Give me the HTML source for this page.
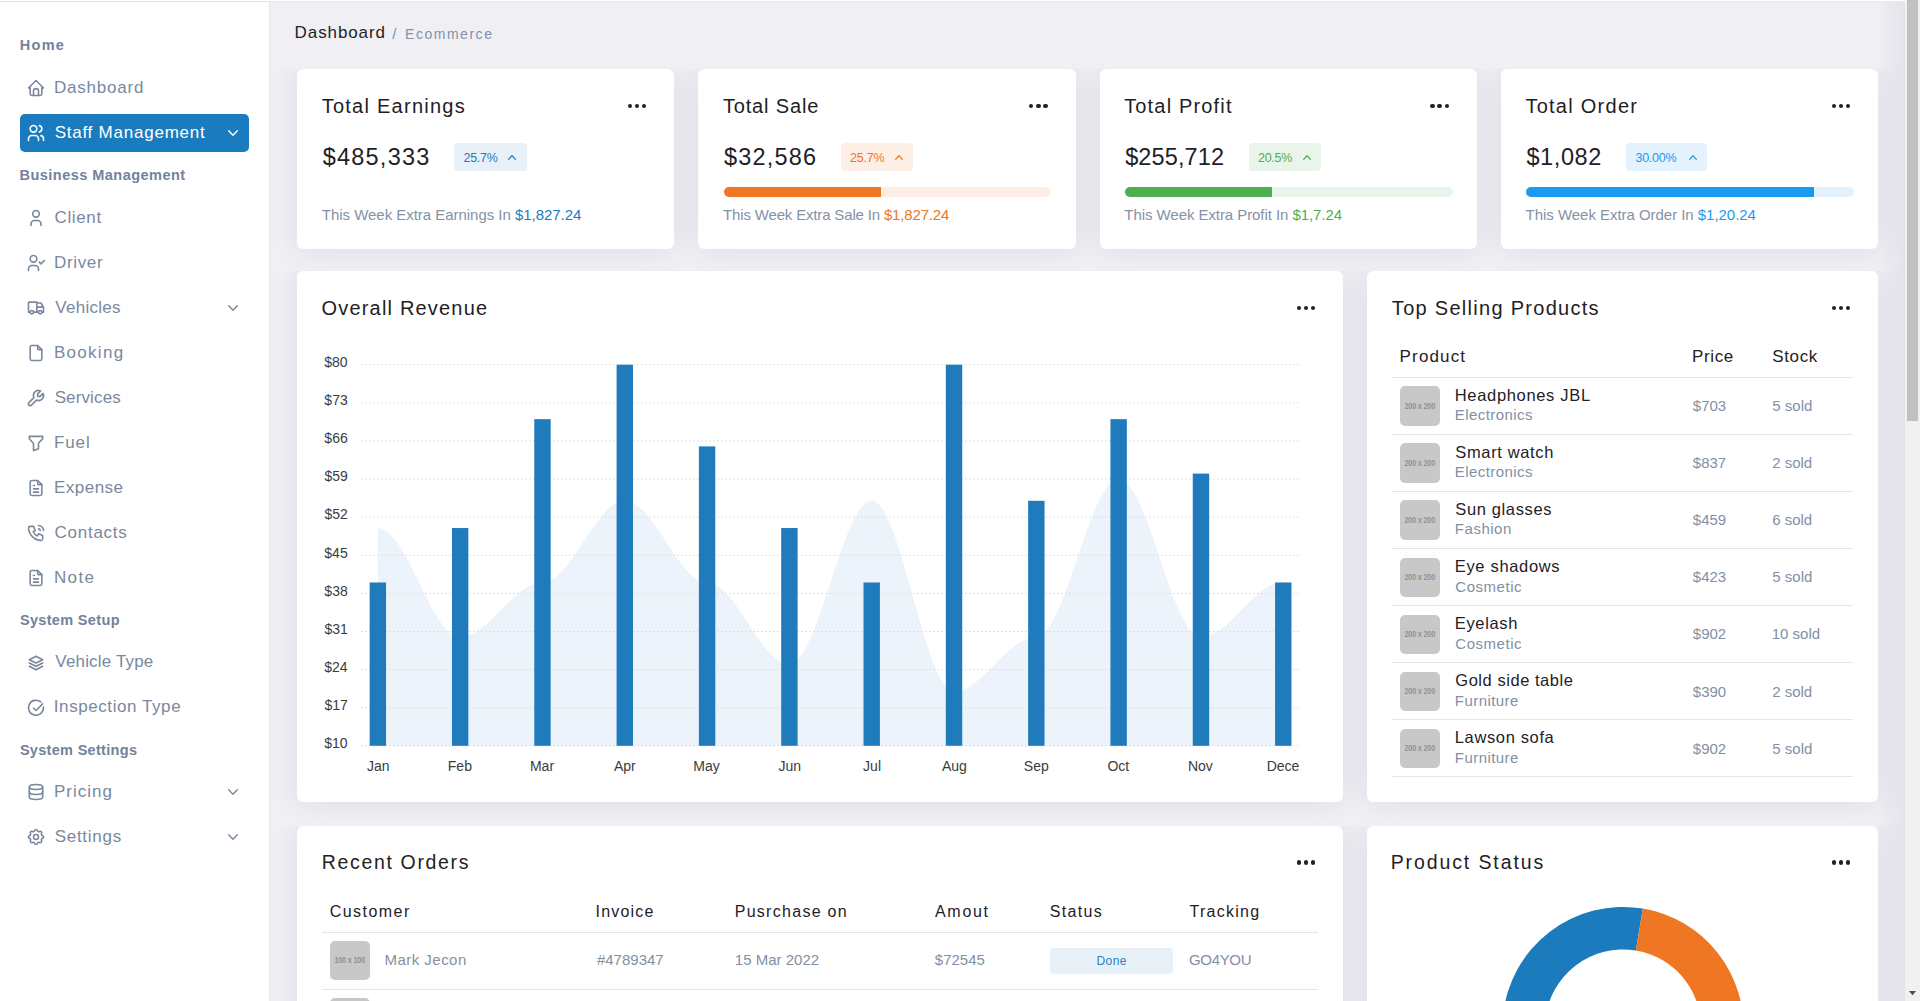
<!DOCTYPE html><html><head><meta charset="utf-8"><style>
*{margin:0;padding:0;box-sizing:border-box}
html,body{width:1920px;height:1001px;overflow:hidden}
body{position:relative;background:#efeff4;font-family:"Liberation Sans",sans-serif}
.t{position:absolute;white-space:nowrap}
.r{position:absolute}
svg{position:absolute;overflow:visible}
.card{position:absolute;background:#fff;border-radius:6px;box-shadow:0 0 30px rgba(30,30,70,0.09);clip-path:inset(0 -80px -80px -80px)}
</style></head><body>

<div class="r" style="left:0.00px;top:0.00px;width:269.00px;height:1001.00px;background:#fff;"></div>
<div class="r" style="left:269.00px;top:0.00px;width:1.00px;height:1001.00px;background:#e6e6e6;"></div>
<div class="r" style="left:0.00px;top:0.00px;width:1920.00px;height:1.00px;background:#fff;"></div>
<div class="r" style="left:0.00px;top:1.00px;width:269.00px;height:1.00px;background:#e3e3e3;"></div>
<div class="r" style="left:270.00px;top:1.00px;width:1635.00px;height:1.00px;background:#e6e9f0;"></div>
<div class="t " style="left:19.83px;top:37.82px;font-size:14.50px;line-height:14.50px;color:#72829a;font-weight:700;letter-spacing:1.260px;">Home</div>
<div class="t " style="left:19.53px;top:167.72px;font-size:14.50px;line-height:14.50px;color:#72829a;font-weight:700;letter-spacing:0.473px;">Business Management</div>
<div class="t " style="left:19.88px;top:613.42px;font-size:14.50px;line-height:14.50px;color:#72829a;font-weight:700;letter-spacing:0.338px;">System Setup</div>
<div class="t " style="left:19.88px;top:742.62px;font-size:14.50px;line-height:14.50px;color:#72829a;font-weight:700;letter-spacing:0.307px;">System Settings</div>
<div class="r" style="left:20.00px;top:114.00px;width:229.00px;height:38.00px;background:#1b7bbf;border-radius:5px;"></div>
<svg style="left:26.00px;top:78.00px" width="20" height="20" viewBox="0 0 24 24" fill="none" stroke="#7a889e" stroke-width="1.92" stroke-linecap="round" stroke-linejoin="round"><path d="M5 12l-2 0l9 -9l9 9l-2 0"/><path d="M5 12v7a2 2 0 0 0 2 2h10a2 2 0 0 0 2 -2v-7"/><path d="M9 21v-6a2 2 0 0 1 2 -2h2a2 2 0 0 1 2 2v6"/></svg>
<div class="t " style="left:54.01px;top:78.61px;font-size:17.00px;line-height:17.00px;color:#7a889e;letter-spacing:0.791px;">Dashboard</div>
<svg style="left:26.00px;top:123.00px" width="20" height="20" viewBox="0 0 24 24" fill="none" stroke="#fff" stroke-width="1.92" stroke-linecap="round" stroke-linejoin="round"><path d="M9 7m-4 0a4 4 0 1 0 8 0a4 4 0 1 0 -8 0"/><path d="M3 21v-2a4 4 0 0 1 4 -4h4a4 4 0 0 1 4 4v2"/><path d="M16 3.13a4 4 0 0 1 0 7.75"/><path d="M21 21v-2a4 4 0 0 0 -3 -3.85"/></svg>
<div class="t " style="left:54.63px;top:123.61px;font-size:17.00px;line-height:17.00px;color:#fff;letter-spacing:0.766px;">Staff Management</div>
<svg style="left:228.30px;top:129.80px" width="10" height="6" viewBox="0 0 10 6"><path d="M0.70 0.70 L5.00 5.30 L9.30 0.70" fill="none" stroke="#fff" stroke-width="1.40" stroke-linecap="round" stroke-linejoin="round"/></svg>
<svg style="left:26.00px;top:208.00px" width="20" height="20" viewBox="0 0 24 24" fill="none" stroke="#7a889e" stroke-width="1.92" stroke-linecap="round" stroke-linejoin="round"><path d="M8 7a4 4 0 1 0 8 0a4 4 0 0 0 -8 0"/><path d="M6 21v-2a4 4 0 0 1 4 -4h4a4 4 0 0 1 4 4v2"/></svg>
<div class="t " style="left:54.54px;top:208.61px;font-size:17.00px;line-height:17.00px;color:#7a889e;letter-spacing:0.625px;">Client</div>
<svg style="left:26.00px;top:253.00px" width="20" height="20" viewBox="0 0 24 24" fill="none" stroke="#7a889e" stroke-width="1.92" stroke-linecap="round" stroke-linejoin="round"><circle cx="9" cy="7" r="4"/><path d="M3 21v-2a4 4 0 0 1 4 -4h4a4 4 0 0 1 4 4v2"/><path d="M16 11l2 2l4 -4"/></svg>
<div class="t " style="left:54.01px;top:253.61px;font-size:17.00px;line-height:17.00px;color:#7a889e;letter-spacing:0.649px;">Driver</div>
<svg style="left:26.00px;top:298.00px" width="20" height="20" viewBox="0 0 24 24" fill="none" stroke="#7a889e" stroke-width="1.92" stroke-linecap="round" stroke-linejoin="round"><path d="M7 17m-2 0a2 2 0 1 0 4 0a2 2 0 1 0 -4 0"/><path d="M17 17m-2 0a2 2 0 1 0 4 0a2 2 0 1 0 -4 0"/><path d="M5 17h-2v-11a1 1 0 0 1 1 -1h9v12m-4 0h6m4 0h2v-6h-8m0 -5h5l3 5"/></svg>
<div class="t " style="left:55.33px;top:298.61px;font-size:17.00px;line-height:17.00px;color:#7a889e;letter-spacing:0.248px;">Vehicles</div>
<svg style="left:228.30px;top:304.80px" width="10" height="6" viewBox="0 0 10 6"><path d="M0.70 0.70 L5.00 5.30 L9.30 0.70" fill="none" stroke="#7a889e" stroke-width="1.40" stroke-linecap="round" stroke-linejoin="round"/></svg>
<svg style="left:26.00px;top:343.00px" width="20" height="20" viewBox="0 0 24 24" fill="none" stroke="#7a889e" stroke-width="1.92" stroke-linecap="round" stroke-linejoin="round"><path d="M14 3v4a1 1 0 0 0 1 1h4"/><path d="M17 21h-10a2 2 0 0 1 -2 -2v-14a2 2 0 0 1 2 -2h7l5 5v11a2 2 0 0 1 -2 2z"/></svg>
<div class="t " style="left:54.01px;top:343.61px;font-size:17.00px;line-height:17.00px;color:#7a889e;letter-spacing:1.276px;">Booking</div>
<svg style="left:26.00px;top:388.00px" width="20" height="20" viewBox="0 0 24 24" fill="none" stroke="#7a889e" stroke-width="1.92" stroke-linecap="round" stroke-linejoin="round"><g transform="translate(24 0) scale(-1 1)"><path d="M7 10h3v-3l-3.5 -3.5a6 6 0 0 1 8 8l6 6a2 2 0 0 1 -3 3l-6 -6a6 6 0 0 1 -8 -8l3.5 3.5"/></g></svg>
<div class="t " style="left:54.63px;top:388.61px;font-size:17.00px;line-height:17.00px;color:#7a889e;letter-spacing:0.129px;">Services</div>
<svg style="left:26.00px;top:433.00px" width="20" height="20" viewBox="0 0 24 24" fill="none" stroke="#7a889e" stroke-width="1.92" stroke-linecap="round" stroke-linejoin="round"><path d="M4 4h16v2.172a2 2 0 0 1 -.586 1.414l-4.414 4.414v7l-6 2v-8.5l-4.48 -4.928a2 2 0 0 1 -.52 -1.345v-2.227z"/></svg>
<div class="t " style="left:54.01px;top:433.61px;font-size:17.00px;line-height:17.00px;color:#7a889e;letter-spacing:0.887px;">Fuel</div>
<svg style="left:26.00px;top:478.00px" width="20" height="20" viewBox="0 0 24 24" fill="none" stroke="#7a889e" stroke-width="1.92" stroke-linecap="round" stroke-linejoin="round"><path d="M14 3v4a1 1 0 0 0 1 1h4"/><path d="M17 21h-10a2 2 0 0 1 -2 -2v-14a2 2 0 0 1 2 -2h7l5 5v11a2 2 0 0 1 -2 2z"/><path d="M9 9l1 0"/><path d="M9 13l6 0"/><path d="M9 17l6 0"/></svg>
<div class="t " style="left:54.01px;top:478.61px;font-size:17.00px;line-height:17.00px;color:#7a889e;letter-spacing:0.482px;">Expense</div>
<svg style="left:26.00px;top:523.00px" width="20" height="20" viewBox="0 0 24 24" fill="none" stroke="#7a889e" stroke-width="1.92" stroke-linecap="round" stroke-linejoin="round"><path d="M5 4h4l2 5l-2.5 1.5a11 11 0 0 0 5 5l1.5 -2.5l5 2v4a2 2 0 0 1 -2 2a16 16 0 0 1 -15 -15a2 2 0 0 1 2 -2"/><path d="M15 7a2 2 0 0 1 2 2"/><path d="M15 3a6 6 0 0 1 6 6"/></svg>
<div class="t " style="left:54.54px;top:523.61px;font-size:17.00px;line-height:17.00px;color:#7a889e;letter-spacing:0.742px;">Contacts</div>
<svg style="left:26.00px;top:568.00px" width="20" height="20" viewBox="0 0 24 24" fill="none" stroke="#7a889e" stroke-width="1.92" stroke-linecap="round" stroke-linejoin="round"><path d="M14 3v4a1 1 0 0 0 1 1h4"/><path d="M17 21h-10a2 2 0 0 1 -2 -2v-14a2 2 0 0 1 2 -2h7l5 5v11a2 2 0 0 1 -2 2z"/><path d="M9 9l1 0"/><path d="M9 13l6 0"/><path d="M9 17l6 0"/></svg>
<div class="t " style="left:54.01px;top:568.61px;font-size:17.00px;line-height:17.00px;color:#7a889e;letter-spacing:1.347px;">Note</div>
<svg style="left:26.00px;top:652.60px" width="20" height="20" viewBox="0 0 24 24" fill="none" stroke="#7a889e" stroke-width="1.92" stroke-linecap="round" stroke-linejoin="round"><path d="M12 4l-8 4l8 4l8 -4l-8 -4"/><path d="M4 12l8 4l8 -4"/><path d="M4 16l8 4l8 -4"/></svg>
<div class="t " style="left:55.33px;top:653.21px;font-size:17.00px;line-height:17.00px;color:#7a889e;letter-spacing:0.169px;">Vehicle Type</div>
<svg style="left:26.00px;top:697.60px" width="20" height="20" viewBox="0 0 24 24" fill="none" stroke="#7a889e" stroke-width="1.92" stroke-linecap="round" stroke-linejoin="round"><path d="M20.94 11a9 9 0 1 1 -3.24 -6.28"/><path d="M9 12l3 3l8 -8"/></svg>
<div class="t " style="left:53.83px;top:698.21px;font-size:17.00px;line-height:17.00px;color:#7a889e;letter-spacing:0.572px;">Inspection Type</div>
<svg style="left:26.00px;top:782.00px" width="20" height="20" viewBox="0 0 24 24" fill="none" stroke="#7a889e" stroke-width="1.92" stroke-linecap="round" stroke-linejoin="round"><path d="M12 6m-8 0a8 3 0 1 0 16 0a8 3 0 1 0 -16 0"/><path d="M4 6v6a8 3 0 0 0 16 0v-6"/><path d="M4 12v6a8 3 0 0 0 16 0v-6"/></svg>
<div class="t " style="left:54.01px;top:782.61px;font-size:17.00px;line-height:17.00px;color:#7a889e;letter-spacing:0.988px;">Pricing</div>
<svg style="left:228.30px;top:788.80px" width="10" height="6" viewBox="0 0 10 6"><path d="M0.70 0.70 L5.00 5.30 L9.30 0.70" fill="none" stroke="#7a889e" stroke-width="1.40" stroke-linecap="round" stroke-linejoin="round"/></svg>
<svg style="left:26.00px;top:827.00px" width="20" height="20" viewBox="0 0 24 24" fill="none" stroke="#7a889e" stroke-width="1.92" stroke-linecap="round" stroke-linejoin="round"><path d="M10.325 4.317c.426 -1.756 2.924 -1.756 3.35 0a1.724 1.724 0 0 0 2.573 1.066c1.543 -.94 3.31 .826 2.37 2.37a1.724 1.724 0 0 0 1.065 2.572c1.756 .426 1.756 2.924 0 3.35a1.724 1.724 0 0 0 -1.066 2.573c.94 1.543 -.826 3.31 -2.37 2.37a1.724 1.724 0 0 0 -2.572 1.065c-.426 1.756 -2.924 1.756 -3.35 0a1.724 1.724 0 0 0 -2.573 -1.066c-1.543 .94 -3.31 -.826 -2.37 -2.37a1.724 1.724 0 0 0 -1.065 -2.572c-1.756 -.426 -1.756 -2.924 0 -3.35a1.724 1.724 0 0 0 1.066 -2.573c-.94 -1.543 .826 -3.31 2.37 -2.37c1 .608 2.296 .07 2.572 -1.065z"/><path d="M9 12a3 3 0 1 0 6 0a3 3 0 0 0 -6 0"/></svg>
<div class="t " style="left:54.63px;top:827.61px;font-size:17.00px;line-height:17.00px;color:#7a889e;letter-spacing:0.737px;">Settings</div>
<svg style="left:228.30px;top:833.80px" width="10" height="6" viewBox="0 0 10 6"><path d="M0.70 0.70 L5.00 5.30 L9.30 0.70" fill="none" stroke="#7a889e" stroke-width="1.40" stroke-linecap="round" stroke-linejoin="round"/></svg>
<div class="t " style="left:294.61px;top:24.46px;font-size:17.00px;line-height:17.00px;color:#1f2125;letter-spacing:0.903px;">Dashboard</div>
<div class="t " style="left:392.30px;top:26.15px;font-size:15.00px;line-height:15.00px;color:#8193aa;">/</div>
<div class="t " style="left:405.05px;top:27.00px;font-size:14.00px;line-height:14.00px;color:#8193aa;letter-spacing:1.523px;">Ecommerce</div>
<div class="card" style="left:297.00px;top:69px;width:377.25px;height:180px"></div>
<div class="t " style="left:321.65px;top:95.77px;font-size:20.00px;line-height:20.00px;color:#1f2125;letter-spacing:1.259px;">Total Earnings</div>
<div class="r" style="left:627.80px;top:103.50px;width:4.4px;height:4.4px;border-radius:50%;background:#222"></div>
<div class="r" style="left:634.90px;top:103.50px;width:4.4px;height:4.4px;border-radius:50%;background:#222"></div>
<div class="r" style="left:642.00px;top:103.50px;width:4.4px;height:4.4px;border-radius:50%;background:#222"></div>
<div class="t " style="left:322.65px;top:145.50px;font-size:23.50px;line-height:23.50px;color:#1f2125;letter-spacing:1.238px;">$485,333</div>
<div class="r" style="left:454.10px;top:143.10px;width:72.60px;height:27.80px;background:#e8f1f8;border-radius:4px;"></div>
<div class="t " style="left:463.47px;top:152.42px;font-size:12.50px;line-height:12.50px;color:#1b7bbf;letter-spacing:-0.258px;">25.7%</div>
<svg style="left:508.30px;top:155.00px" width="8" height="5" viewBox="0 0 8 5"><path d="M0.65 4.35 L4.00 0.65 L7.35 4.35" fill="none" stroke="#1b7bbf" stroke-width="1.30" stroke-linecap="round" stroke-linejoin="round"/></svg>
<div class="t " style="left:321.86px;top:207.30px;font-size:15.00px;line-height:15.00px;color:#8492a6;letter-spacing:-0.033px;">This Week Extra Earnings In <span style="color:#1b7bbf">$1,827.24</span></div>
<div class="card" style="left:698.25px;top:69px;width:377.25px;height:180px"></div>
<div class="t " style="left:722.90px;top:95.77px;font-size:20.00px;line-height:20.00px;color:#1f2125;letter-spacing:0.843px;">Total Sale</div>
<div class="r" style="left:1029.05px;top:103.50px;width:4.4px;height:4.4px;border-radius:50%;background:#222"></div>
<div class="r" style="left:1036.15px;top:103.50px;width:4.4px;height:4.4px;border-radius:50%;background:#222"></div>
<div class="r" style="left:1043.25px;top:103.50px;width:4.4px;height:4.4px;border-radius:50%;background:#222"></div>
<div class="t " style="left:723.90px;top:145.50px;font-size:23.50px;line-height:23.50px;color:#1f2125;letter-spacing:1.190px;">$32,586</div>
<div class="r" style="left:840.75px;top:143.10px;width:72.70px;height:27.80px;background:#fdefe6;border-radius:4px;"></div>
<div class="t " style="left:850.12px;top:152.42px;font-size:12.50px;line-height:12.50px;color:#ef7623;letter-spacing:-0.258px;">25.7%</div>
<svg style="left:895.05px;top:155.00px" width="8" height="5" viewBox="0 0 8 5"><path d="M0.65 4.35 L4.00 0.65 L7.35 4.35" fill="none" stroke="#ef7623" stroke-width="1.30" stroke-linecap="round" stroke-linejoin="round"/></svg>
<div class="r" style="left:723.75px;top:187.20px;width:327.50px;height:9.80px;background:#fdefe6;border-radius:5px;overflow:hidden;"></div>
<div class="r" style="left:723.75px;top:187.20px;width:157.00px;height:9.80px;background:#ef7623;border-radius:5px 0 0 5px;"></div>
<div class="t " style="left:723.11px;top:207.30px;font-size:15.00px;line-height:15.00px;color:#8492a6;letter-spacing:-0.166px;">This Week Extra Sale In <span style="color:#ef7623">$1,827.24</span></div>
<div class="card" style="left:1099.50px;top:69px;width:377.25px;height:180px"></div>
<div class="t " style="left:1124.15px;top:95.77px;font-size:20.00px;line-height:20.00px;color:#1f2125;letter-spacing:1.172px;">Total Profit</div>
<div class="r" style="left:1430.30px;top:103.50px;width:4.4px;height:4.4px;border-radius:50%;background:#222"></div>
<div class="r" style="left:1437.40px;top:103.50px;width:4.4px;height:4.4px;border-radius:50%;background:#222"></div>
<div class="r" style="left:1444.50px;top:103.50px;width:4.4px;height:4.4px;border-radius:50%;background:#222"></div>
<div class="t " style="left:1125.15px;top:145.50px;font-size:23.50px;line-height:23.50px;color:#1f2125;letter-spacing:0.117px;">$255,712</div>
<div class="r" style="left:1248.60px;top:143.10px;width:72.60px;height:27.80px;background:#e9f5ea;border-radius:4px;"></div>
<div class="t " style="left:1257.97px;top:152.42px;font-size:12.50px;line-height:12.50px;color:#4caf50;letter-spacing:-0.258px;">20.5%</div>
<svg style="left:1302.80px;top:155.00px" width="8" height="5" viewBox="0 0 8 5"><path d="M0.65 4.35 L4.00 0.65 L7.35 4.35" fill="none" stroke="#4caf50" stroke-width="1.30" stroke-linecap="round" stroke-linejoin="round"/></svg>
<div class="r" style="left:1125.00px;top:187.20px;width:327.50px;height:9.80px;background:#e9f5ea;border-radius:5px;overflow:hidden;"></div>
<div class="r" style="left:1125.00px;top:187.20px;width:147.00px;height:9.80px;background:#4caf50;border-radius:5px 0 0 5px;"></div>
<div class="t " style="left:1124.36px;top:207.30px;font-size:15.00px;line-height:15.00px;color:#8492a6;letter-spacing:-0.066px;">This Week Extra Profit In <span style="color:#4caf50">$1,7.24</span></div>
<div class="card" style="left:1500.75px;top:69px;width:377.25px;height:180px"></div>
<div class="t " style="left:1525.40px;top:95.77px;font-size:20.00px;line-height:20.00px;color:#1f2125;letter-spacing:1.264px;">Total Order</div>
<div class="r" style="left:1831.55px;top:103.50px;width:4.4px;height:4.4px;border-radius:50%;background:#222"></div>
<div class="r" style="left:1838.65px;top:103.50px;width:4.4px;height:4.4px;border-radius:50%;background:#222"></div>
<div class="r" style="left:1845.75px;top:103.50px;width:4.4px;height:4.4px;border-radius:50%;background:#222"></div>
<div class="t " style="left:1526.40px;top:145.50px;font-size:23.50px;line-height:23.50px;color:#1f2125;letter-spacing:0.611px;">$1,082</div>
<div class="r" style="left:1625.95px;top:143.10px;width:81.50px;height:27.80px;background:#e3f2fd;border-radius:4px;"></div>
<div class="t " style="left:1635.47px;top:152.42px;font-size:12.50px;line-height:12.50px;color:#1a9bf0;letter-spacing:-0.249px;">30.00%</div>
<svg style="left:1689.05px;top:155.00px" width="8" height="5" viewBox="0 0 8 5"><path d="M0.65 4.35 L4.00 0.65 L7.35 4.35" fill="none" stroke="#1a9bf0" stroke-width="1.30" stroke-linecap="round" stroke-linejoin="round"/></svg>
<div class="r" style="left:1526.25px;top:187.20px;width:327.50px;height:9.80px;background:#e3f2fd;border-radius:5px;overflow:hidden;"></div>
<div class="r" style="left:1526.25px;top:187.20px;width:287.80px;height:9.80px;background:#1a9bf0;border-radius:5px 0 0 5px;"></div>
<div class="t " style="left:1525.61px;top:207.30px;font-size:15.00px;line-height:15.00px;color:#8492a6;letter-spacing:-0.037px;">This Week Extra Order In <span style="color:#1a9bf0">$1,20.24</span></div>
<div class="card" style="left:297px;top:271px;width:1046.25px;height:530.5px"></div>
<div class="t " style="left:321.55px;top:298.07px;font-size:20.00px;line-height:20.00px;color:#1f2125;letter-spacing:1.184px;">Overall Revenue</div>
<div class="r" style="left:1296.80px;top:305.50px;width:4.4px;height:4.4px;border-radius:50%;background:#222"></div>
<div class="r" style="left:1303.90px;top:305.50px;width:4.4px;height:4.4px;border-radius:50%;background:#222"></div>
<div class="r" style="left:1311.00px;top:305.50px;width:4.4px;height:4.4px;border-radius:50%;background:#222"></div>
<svg style="left:0;top:0" width="1920" height="1001"><path d="M377.85 745.80 L377.85 528.04 C406.66 528.04 431.35 636.92 460.16 636.92 C488.97 636.92 513.66 582.48 542.47 582.48 C571.28 582.48 595.97 500.82 624.78 500.82 C653.59 500.82 678.28 582.48 707.09 582.48 C735.90 582.48 760.59 664.14 789.40 664.14 C818.21 664.14 842.90 500.82 871.71 500.82 C900.52 500.82 925.21 691.36 954.02 691.36 C982.83 691.36 1007.52 636.92 1036.33 636.92 C1065.14 636.92 1089.83 479.04 1118.64 479.04 C1147.45 479.04 1172.14 636.92 1200.95 636.92 C1229.76 636.92 1254.45 582.48 1283.26 582.48 L1283.26 745.80 Z" fill="#ecf3fa"/><line x1="361" y1="364.70" x2="1300" y2="364.70" stroke="#e0e0e0" stroke-width="1" stroke-dasharray="2 2"/><line x1="361" y1="402.81" x2="1300" y2="402.81" stroke="#e0e0e0" stroke-width="1" stroke-dasharray="2 2"/><line x1="361" y1="440.92" x2="1300" y2="440.92" stroke="#e0e0e0" stroke-width="1" stroke-dasharray="2 2"/><line x1="361" y1="479.03" x2="1300" y2="479.03" stroke="#e0e0e0" stroke-width="1" stroke-dasharray="2 2"/><line x1="361" y1="517.14" x2="1300" y2="517.14" stroke="#e0e0e0" stroke-width="1" stroke-dasharray="2 2"/><line x1="361" y1="555.25" x2="1300" y2="555.25" stroke="#e0e0e0" stroke-width="1" stroke-dasharray="2 2"/><line x1="361" y1="593.36" x2="1300" y2="593.36" stroke="#e0e0e0" stroke-width="1" stroke-dasharray="2 2"/><line x1="361" y1="631.47" x2="1300" y2="631.47" stroke="#e0e0e0" stroke-width="1" stroke-dasharray="2 2"/><line x1="361" y1="669.58" x2="1300" y2="669.58" stroke="#e0e0e0" stroke-width="1" stroke-dasharray="2 2"/><line x1="361" y1="707.69" x2="1300" y2="707.69" stroke="#e0e0e0" stroke-width="1" stroke-dasharray="2 2"/><line x1="361" y1="745.80" x2="1300" y2="745.80" stroke="#e0e0e0" stroke-width="1" stroke-dasharray="2 2"/><rect x="369.65" y="582.48" width="16.4" height="163.32" fill="#1f7bbc"/><rect x="451.96" y="528.04" width="16.4" height="217.76" fill="#1f7bbc"/><rect x="534.27" y="419.16" width="16.4" height="326.64" fill="#1f7bbc"/><rect x="616.58" y="364.72" width="16.4" height="381.08" fill="#1f7bbc"/><rect x="698.89" y="446.38" width="16.4" height="299.42" fill="#1f7bbc"/><rect x="781.20" y="528.04" width="16.4" height="217.76" fill="#1f7bbc"/><rect x="863.51" y="582.48" width="16.4" height="163.32" fill="#1f7bbc"/><rect x="945.82" y="364.72" width="16.4" height="381.08" fill="#1f7bbc"/><rect x="1028.13" y="500.82" width="16.4" height="244.98" fill="#1f7bbc"/><rect x="1110.44" y="419.16" width="16.4" height="326.64" fill="#1f7bbc"/><rect x="1192.75" y="473.60" width="16.4" height="272.20" fill="#1f7bbc"/><rect x="1275.06" y="582.48" width="16.4" height="163.32" fill="#1f7bbc"/></svg>
<div class="t " style="left:324.29px;top:354.95px;font-size:14.00px;line-height:14.00px;color:#373d3f;">$80</div>
<div class="t " style="left:324.36px;top:393.06px;font-size:14.00px;line-height:14.00px;color:#373d3f;">$73</div>
<div class="t " style="left:324.36px;top:431.17px;font-size:14.00px;line-height:14.00px;color:#373d3f;">$66</div>
<div class="t " style="left:324.40px;top:469.28px;font-size:14.00px;line-height:14.00px;color:#373d3f;">$59</div>
<div class="t " style="left:324.45px;top:507.39px;font-size:14.00px;line-height:14.00px;color:#373d3f;">$52</div>
<div class="t " style="left:324.33px;top:545.50px;font-size:14.00px;line-height:14.00px;color:#373d3f;">$45</div>
<div class="t " style="left:324.35px;top:583.61px;font-size:14.00px;line-height:14.00px;color:#373d3f;">$38</div>
<div class="t " style="left:324.43px;top:621.72px;font-size:14.00px;line-height:14.00px;color:#373d3f;">$31</div>
<div class="t " style="left:324.15px;top:659.83px;font-size:14.00px;line-height:14.00px;color:#373d3f;">$24</div>
<div class="t " style="left:324.45px;top:697.94px;font-size:14.00px;line-height:14.00px;color:#373d3f;">$17</div>
<div class="t " style="left:324.29px;top:736.05px;font-size:14.00px;line-height:14.00px;color:#373d3f;">$10</div>
<div class="t " style="left:366.91px;top:759.45px;font-size:14.00px;line-height:14.00px;color:#373d3f;">Jan</div>
<div class="t " style="left:447.82px;top:759.45px;font-size:14.00px;line-height:14.00px;color:#373d3f;">Feb</div>
<div class="t " style="left:529.96px;top:759.45px;font-size:14.00px;line-height:14.00px;color:#373d3f;">Mar</div>
<div class="t " style="left:613.99px;top:759.45px;font-size:14.00px;line-height:14.00px;color:#373d3f;">Apr</div>
<div class="t " style="left:693.31px;top:759.45px;font-size:14.00px;line-height:14.00px;color:#373d3f;">May</div>
<div class="t " style="left:778.46px;top:759.45px;font-size:14.00px;line-height:14.00px;color:#373d3f;">Jun</div>
<div class="t " style="left:863.12px;top:759.45px;font-size:14.00px;line-height:14.00px;color:#373d3f;">Jul</div>
<div class="t " style="left:942.00px;top:759.45px;font-size:14.00px;line-height:14.00px;color:#373d3f;">Aug</div>
<div class="t " style="left:1023.85px;top:759.45px;font-size:14.00px;line-height:14.00px;color:#373d3f;">Sep</div>
<div class="t " style="left:1107.47px;top:759.45px;font-size:14.00px;line-height:14.00px;color:#373d3f;">Oct</div>
<div class="t " style="left:1187.95px;top:759.45px;font-size:14.00px;line-height:14.00px;color:#373d3f;">Nov</div>
<div class="t " style="left:1266.66px;top:759.45px;font-size:14.00px;line-height:14.00px;color:#373d3f;">Dece</div>
<div class="card" style="left:1367.25px;top:271px;width:510.75px;height:530.5px"></div>
<div class="t " style="left:1391.85px;top:298.07px;font-size:20.00px;line-height:20.00px;color:#1f2125;letter-spacing:1.286px;">Top Selling Products</div>
<div class="r" style="left:1831.70px;top:305.50px;width:4.4px;height:4.4px;border-radius:50%;background:#222"></div>
<div class="r" style="left:1838.80px;top:305.50px;width:4.4px;height:4.4px;border-radius:50%;background:#222"></div>
<div class="r" style="left:1845.90px;top:305.50px;width:4.4px;height:4.4px;border-radius:50%;background:#222"></div>
<div class="t " style="left:1399.61px;top:348.21px;font-size:17.00px;line-height:17.00px;color:#1f2125;letter-spacing:1.139px;">Product</div>
<div class="t " style="left:1692.11px;top:348.21px;font-size:17.00px;line-height:17.00px;color:#1f2125;letter-spacing:0.580px;">Price</div>
<div class="t " style="left:1772.13px;top:348.21px;font-size:17.00px;line-height:17.00px;color:#1f2125;letter-spacing:0.683px;">Stock</div>
<div class="r" style="left:1392.00px;top:376.60px;width:460.80px;height:1.00px;background:#e6e6e6;"></div>
<div class="r" style="left:1400.20px;top:386.20px;width:39.50px;height:39.50px;background:#c8c8c8;border-radius:5px;"></div>
<div class="t" style="left:1400.2px;top:401.50px;width:39.5px;text-align:center;font-size:9px;line-height:9px;font-weight:700;color:#939393;letter-spacing:-0.3px;transform:scaleX(0.82)">200 x 200</div>
<div class="t " style="left:1454.75px;top:386.63px;font-size:16.50px;line-height:16.50px;color:#1f2125;letter-spacing:0.671px;">Headphones JBL</div>
<div class="t " style="left:1454.87px;top:407.20px;font-size:15.00px;line-height:15.00px;color:#8290a5;letter-spacing:0.430px;">Electronics</div>
<div class="t " style="left:1692.84px;top:398.00px;font-size:15.00px;line-height:15.00px;color:#8290a5;">$703</div>
<div class="t " style="left:1772.30px;top:398.00px;font-size:15.00px;line-height:15.00px;color:#8290a5;">5 sold</div>
<div class="r" style="left:1392.00px;top:433.70px;width:460.80px;height:1.00px;background:#e6e6e6;"></div>
<div class="r" style="left:1400.20px;top:443.30px;width:39.50px;height:39.50px;background:#c8c8c8;border-radius:5px;"></div>
<div class="t" style="left:1400.2px;top:458.60px;width:39.5px;text-align:center;font-size:9px;line-height:9px;font-weight:700;color:#939393;letter-spacing:-0.3px;transform:scaleX(0.82)">200 x 200</div>
<div class="t " style="left:1455.35px;top:443.73px;font-size:16.50px;line-height:16.50px;color:#1f2125;letter-spacing:0.629px;">Smart watch</div>
<div class="t " style="left:1454.87px;top:464.30px;font-size:15.00px;line-height:15.00px;color:#8290a5;letter-spacing:0.430px;">Electronics</div>
<div class="t " style="left:1692.84px;top:455.10px;font-size:15.00px;line-height:15.00px;color:#8290a5;">$837</div>
<div class="t " style="left:1772.15px;top:455.10px;font-size:15.00px;line-height:15.00px;color:#8290a5;">2 sold</div>
<div class="r" style="left:1392.00px;top:490.80px;width:460.80px;height:1.00px;background:#e6e6e6;"></div>
<div class="r" style="left:1400.20px;top:500.40px;width:39.50px;height:39.50px;background:#c8c8c8;border-radius:5px;"></div>
<div class="t" style="left:1400.2px;top:515.70px;width:39.5px;text-align:center;font-size:9px;line-height:9px;font-weight:700;color:#939393;letter-spacing:-0.3px;transform:scaleX(0.82)">200 x 200</div>
<div class="t " style="left:1455.35px;top:500.83px;font-size:16.50px;line-height:16.50px;color:#1f2125;letter-spacing:0.620px;">Sun glasses</div>
<div class="t " style="left:1454.87px;top:521.40px;font-size:15.00px;line-height:15.00px;color:#8290a5;letter-spacing:0.512px;">Fashion</div>
<div class="t " style="left:1692.84px;top:512.20px;font-size:15.00px;line-height:15.00px;color:#8290a5;">$459</div>
<div class="t " style="left:1772.14px;top:512.20px;font-size:15.00px;line-height:15.00px;color:#8290a5;">6 sold</div>
<div class="r" style="left:1392.00px;top:547.90px;width:460.80px;height:1.00px;background:#e6e6e6;"></div>
<div class="r" style="left:1400.20px;top:557.50px;width:39.50px;height:39.50px;background:#c8c8c8;border-radius:5px;"></div>
<div class="t" style="left:1400.2px;top:572.80px;width:39.5px;text-align:center;font-size:9px;line-height:9px;font-weight:700;color:#939393;letter-spacing:-0.3px;transform:scaleX(0.82)">200 x 200</div>
<div class="t " style="left:1454.75px;top:557.93px;font-size:16.50px;line-height:16.50px;color:#1f2125;letter-spacing:0.673px;">Eye shadows</div>
<div class="t " style="left:1455.34px;top:578.50px;font-size:15.00px;line-height:15.00px;color:#8290a5;letter-spacing:0.526px;">Cosmetic</div>
<div class="t " style="left:1692.84px;top:569.30px;font-size:15.00px;line-height:15.00px;color:#8290a5;">$423</div>
<div class="t " style="left:1772.30px;top:569.30px;font-size:15.00px;line-height:15.00px;color:#8290a5;">5 sold</div>
<div class="r" style="left:1392.00px;top:605.00px;width:460.80px;height:1.00px;background:#e6e6e6;"></div>
<div class="r" style="left:1400.20px;top:614.60px;width:39.50px;height:39.50px;background:#c8c8c8;border-radius:5px;"></div>
<div class="t" style="left:1400.2px;top:629.90px;width:39.5px;text-align:center;font-size:9px;line-height:9px;font-weight:700;color:#939393;letter-spacing:-0.3px;transform:scaleX(0.82)">200 x 200</div>
<div class="t " style="left:1454.75px;top:615.03px;font-size:16.50px;line-height:16.50px;color:#1f2125;letter-spacing:0.657px;">Eyelash</div>
<div class="t " style="left:1455.34px;top:635.60px;font-size:15.00px;line-height:15.00px;color:#8290a5;letter-spacing:0.526px;">Cosmetic</div>
<div class="t " style="left:1692.84px;top:626.40px;font-size:15.00px;line-height:15.00px;color:#8290a5;">$902</div>
<div class="t " style="left:1771.76px;top:626.40px;font-size:15.00px;line-height:15.00px;color:#8290a5;">10 sold</div>
<div class="r" style="left:1392.00px;top:662.10px;width:460.80px;height:1.00px;background:#e6e6e6;"></div>
<div class="r" style="left:1400.20px;top:671.70px;width:39.50px;height:39.50px;background:#c8c8c8;border-radius:5px;"></div>
<div class="t" style="left:1400.2px;top:687.00px;width:39.5px;text-align:center;font-size:9px;line-height:9px;font-weight:700;color:#939393;letter-spacing:-0.3px;transform:scaleX(0.82)">200 x 200</div>
<div class="t " style="left:1455.27px;top:672.13px;font-size:16.50px;line-height:16.50px;color:#1f2125;letter-spacing:0.543px;">Gold side table</div>
<div class="t " style="left:1454.87px;top:692.70px;font-size:15.00px;line-height:15.00px;color:#8290a5;letter-spacing:0.436px;">Furniture</div>
<div class="t " style="left:1692.84px;top:683.50px;font-size:15.00px;line-height:15.00px;color:#8290a5;">$390</div>
<div class="t " style="left:1772.15px;top:683.50px;font-size:15.00px;line-height:15.00px;color:#8290a5;">2 sold</div>
<div class="r" style="left:1392.00px;top:719.20px;width:460.80px;height:1.00px;background:#e6e6e6;"></div>
<div class="r" style="left:1400.20px;top:728.80px;width:39.50px;height:39.50px;background:#c8c8c8;border-radius:5px;"></div>
<div class="t" style="left:1400.2px;top:744.10px;width:39.5px;text-align:center;font-size:9px;line-height:9px;font-weight:700;color:#939393;letter-spacing:-0.3px;transform:scaleX(0.82)">200 x 200</div>
<div class="t " style="left:1454.75px;top:729.23px;font-size:16.50px;line-height:16.50px;color:#1f2125;letter-spacing:0.639px;">Lawson sofa</div>
<div class="t " style="left:1454.87px;top:749.80px;font-size:15.00px;line-height:15.00px;color:#8290a5;letter-spacing:0.436px;">Furniture</div>
<div class="t " style="left:1692.84px;top:740.60px;font-size:15.00px;line-height:15.00px;color:#8290a5;">$902</div>
<div class="t " style="left:1772.30px;top:740.60px;font-size:15.00px;line-height:15.00px;color:#8290a5;">5 sold</div>
<div class="r" style="left:1392.00px;top:776.30px;width:460.80px;height:1.00px;background:#e6e6e6;"></div>
<div class="card" style="left:297px;top:825.9px;width:1046.25px;height:400px"></div>
<div class="t " style="left:321.80px;top:853.19px;font-size:19.50px;line-height:19.50px;color:#1f2125;letter-spacing:1.651px;">Recent Orders</div>
<div class="r" style="left:1296.80px;top:860.30px;width:4.4px;height:4.4px;border-radius:50%;background:#222"></div>
<div class="r" style="left:1303.90px;top:860.30px;width:4.4px;height:4.4px;border-radius:50%;background:#222"></div>
<div class="r" style="left:1311.00px;top:860.30px;width:4.4px;height:4.4px;border-radius:50%;background:#222"></div>
<div class="t " style="left:329.79px;top:903.65px;font-size:16.00px;line-height:16.00px;color:#1f2125;letter-spacing:1.443px;">Customer</div>
<div class="t " style="left:595.52px;top:903.65px;font-size:16.00px;line-height:16.00px;color:#1f2125;letter-spacing:1.197px;">Invoice</div>
<div class="t " style="left:734.69px;top:903.65px;font-size:16.00px;line-height:16.00px;color:#1f2125;letter-spacing:1.285px;">Pusrchase on</div>
<div class="t " style="left:934.97px;top:903.65px;font-size:16.00px;line-height:16.00px;color:#1f2125;letter-spacing:1.705px;">Amout</div>
<div class="t " style="left:1049.87px;top:903.65px;font-size:16.00px;line-height:16.00px;color:#1f2125;letter-spacing:1.304px;">Status</div>
<div class="t " style="left:1189.44px;top:903.65px;font-size:16.00px;line-height:16.00px;color:#1f2125;letter-spacing:1.268px;">Tracking</div>
<div class="r" style="left:322.00px;top:932.20px;width:996.00px;height:1.00px;background:#e6e6e6;"></div>
<div class="r" style="left:322.00px;top:989.10px;width:996.00px;height:1.00px;background:#e6e6e6;"></div>
<div class="r" style="left:330.30px;top:941.30px;width:39.40px;height:39.20px;background:#c8c8c8;border-radius:5px;"></div>
<div class="t" style="left:330.3px;top:956.4px;width:39.4px;text-align:center;font-size:9px;line-height:9px;font-weight:700;color:#939393;letter-spacing:-0.3px;transform:scaleX(0.82)">100 x 100</div>
<div class="r" style="left:330.30px;top:998.40px;width:39.40px;height:10.00px;background:#c8c8c8;border-radius:5px;"></div>
<div class="t " style="left:384.47px;top:951.90px;font-size:15.00px;line-height:15.00px;color:#8290a5;letter-spacing:0.475px;">Mark Jecon</div>
<div class="t " style="left:596.93px;top:951.90px;font-size:15.00px;line-height:15.00px;color:#8290a5;">#4789347</div>
<div class="t " style="left:734.86px;top:951.90px;font-size:15.00px;line-height:15.00px;color:#8290a5;">15 Mar 2022</div>
<div class="t " style="left:934.84px;top:951.90px;font-size:15.00px;line-height:15.00px;color:#8290a5;">$72545</div>
<div class="r" style="left:1050.30px;top:948.20px;width:122.60px;height:25.60px;background:#e8f1f8;border-radius:4px;"></div>
<div class="t " style="left:1096.45px;top:954.84px;font-size:12.00px;line-height:12.00px;color:#2a7fc0;letter-spacing:0.453px;">Done</div>
<div class="t " style="left:1189.05px;top:951.90px;font-size:15.00px;line-height:15.00px;color:#8290a5;letter-spacing:-0.354px;">GO4YOU</div>
<div class="card" style="left:1367.25px;top:825.9px;width:510.75px;height:400px"></div>
<div class="t " style="left:1390.70px;top:853.19px;font-size:19.50px;line-height:19.50px;color:#1f2125;letter-spacing:1.892px;">Product Status</div>
<div class="r" style="left:1831.70px;top:860.30px;width:4.4px;height:4.4px;border-radius:50%;background:#222"></div>
<div class="r" style="left:1838.80px;top:860.30px;width:4.4px;height:4.4px;border-radius:50%;background:#222"></div>
<div class="r" style="left:1845.90px;top:860.30px;width:4.4px;height:4.4px;border-radius:50%;background:#222"></div>
<svg style="left:0;top:0" width="1920" height="1001"><path d="M1620.90 1147.88 A120.50 120.50 0 1 1 1642.89 908.55 L1635.87 950.47 A78.00 78.00 0 1 0 1621.64 1105.39 Z" fill="#1c7bbc"/><path d="M1642.89 908.55 A120.50 120.50 0 0 1 1625.10 1147.88 L1624.36 1105.39 A78.00 78.00 0 0 0 1635.87 950.47 Z" fill="#ef7622"/></svg>
<div class="r" style="left:1878.00px;top:2.00px;width:27.00px;height:999.00px;background:linear-gradient(to right, rgba(30,30,70,0) 0%, rgba(30,30,70,0.03) 45%, rgba(30,30,70,0.055) 100%);"></div>
<div class="r" style="left:1905.00px;top:0.00px;width:15.00px;height:1001.00px;background:#f1f1f1;"></div>
<div class="r" style="left:1907.00px;top:0.00px;width:11.00px;height:421.00px;background:#c1c1c1;"></div>
<svg style="left:1905px;top:986px" width="15" height="15"><path d="M3.9 5 L11.1 5 L7.5 9.2 Z" fill="#505050"/></svg>
</body></html>
